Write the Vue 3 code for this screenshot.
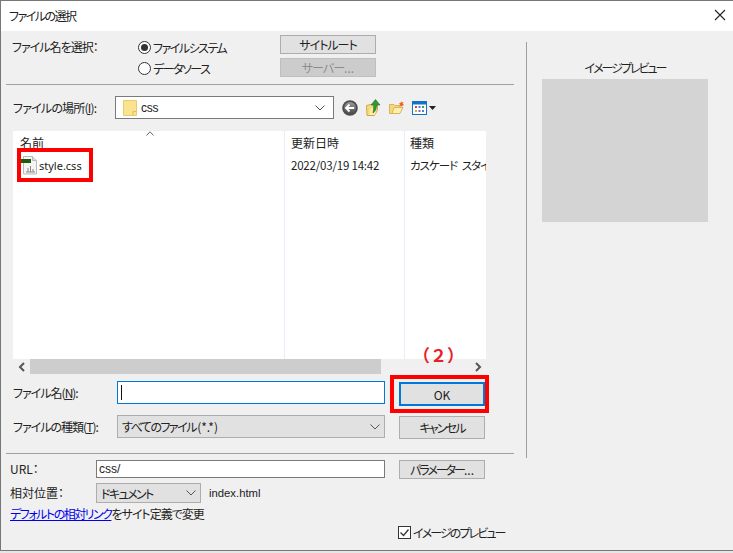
<template>
  <div class="dialog">
    <div class="titlebar">
      <span class="title">ファイルの選択</span>
      <svg class="close" width="12" height="12" viewBox="0 0 12 12"><path d="M1 1l10 10M11 1L1 11" stroke="#222" stroke-width="1.1" fill="none"/></svg>
    </div>

    <div class="body">
      <div class="left">
        <!-- 選択元 -->
        <div class="source-row">
          <span class="source-label">ファイル名を選択：</span>
          <div class="radios">
            <label class="radio"><i class="dot on"></i>ファイルシステム</label>
            <label class="radio"><i class="dot"></i>データソース</label>
          </div>
          <div class="site-btns">
            <button class="btn site">サイトルート</button>
            <button class="btn site off">サーバー<span class="plain">...</span></button>
          </div>
        </div>
        <div class="rule"></div>

        <!-- 場所 -->
        <div class="place-row">
          <span class="place-label">ファイルの場所(<u>I</u>):</span>
          <div class="place-select">
            <svg width="14" height="16" viewBox="0 0 14 16"><path d="M.5.5h13v15H.5z" fill="#fbe28f" stroke="#e8cb70"/><path d="M10 15.500v-4h3.500" fill="none" stroke="#e0bd5c"/></svg>
            <span>css</span>
            <svg class="chev" width="10" height="6" viewBox="0 0 10 6"><path d="M.5.5L5 5 9.500.5" fill="none" stroke="#555"/></svg>
          </div>
          <div class="tools">
            <svg width="16" height="16" viewBox="0 0 16 16"><defs><linearGradient id="backfill" x1="0" y1="0" x2="0" y2="1"><stop offset="0" stop-color="#9a9a9a"/><stop offset="1" stop-color="#4a4a4a"/></linearGradient></defs><circle cx="8" cy="8" r="7.800" fill="#4d4d4d"/><circle cx="8" cy="8" r="6" fill="url(#backfill)"/><path d="M3.800 8h8.400M7.500 4.500L4 8l3.500 3.500" fill="none" stroke="#fff" stroke-width="1.800"/></svg>
            <svg width="15" height="17" viewBox="0 0 15 17"><path d="M.5 6.500l4-1 7 .5v5l-3 5.500H1z" fill="#f8da7c" stroke="#cfa945"/><path d="M3 16l2-7h6l-2 7z" fill="#fdeca6"/><path d="M7 14c3-2 3.500-5 3.500-8H14L9.500.5 5 6h2.800c0 3-.3 5.500-.8 8z" fill="#2f9a35" stroke="#1c6e24" stroke-width=".6"/></svg>
            <svg width="15" height="13" viewBox="0 0 15 13"><path d="M.5 3.500h4.500l1 1h5v2l-2.500 6H.5z" fill="#f7d878" stroke="#d7b65a"/><path d="M3 12.500l2-6h9l-3 6z" fill="#fdeeb0" stroke="#d7b65a"/><path d="M12 0l.7 1.600L14.500 1l-.7 1.800L15 4l-1.500.5L13 6l-1-1.200-1.500.2.500-1.500-1-1.200 1.600-.3z" fill="#f0641e"/></svg>
            <span class="view-btn">
              <svg width="15" height="14" viewBox="0 0 15 14"><rect x=".5" y=".5" width="14" height="13" fill="#fff" stroke="#1472c9"/><rect x="1" y="1" width="13" height="2.500" fill="#1472c9"/><path d="M3 5h2v2H3z" fill="#d8433b"/><path d="M6.500 5h2v2h-2z" fill="#3f86d8"/><path d="M10 5h2v2h-2z" fill="#4aa13f"/><path d="M3 9h2v2H3z" fill="#e8a33a"/><path d="M6.500 9h2v2h-2z" fill="#8b5fc7"/><path d="M10 9h2v2h-2z" fill="#3f86d8"/></svg>
              <svg width="7" height="4" viewBox="0 0 7 4"><path d="M0 0h7L3.500 4z" fill="#222"/></svg>
            </span>
          </div>
        </div>

        <!-- ファイル一覧 -->
        <div class="files">
          <div class="file-table">
            <div class="col col-name">
              <svg class="sort" width="8" height="5" viewBox="0 0 8 5"><path d="M.5 4.500L4 .8l3.500 3.700" fill="none" stroke="#666"/></svg>
              <div class="head">名前</div>
              <div class="cell name-cell">
                <svg width="18" height="20" viewBox="0 0 18 20"><path d="M3.500.5h9l4 4v13.500h-13z" fill="#f4f4f4" stroke="#b9b9b9"/><path d="M12.500.5v4h4" fill="#ddd" stroke="#b9b9b9"/><rect x="1" y="3" width="10" height="4" fill="#1f5a0e"/><path d="M6 16h9M8 12v4M10.500 10v6M13 13v3" stroke="#8a8a8a" fill="none"/></svg>
                <span>style.css</span>
              </div>
            </div>
            <div class="col col-date">
              <div class="head">更新日時</div>
              <div class="cell date-cell">2022/03/19 14:42</div>
            </div>
            <div class="col col-type">
              <div class="head">種類</div>
              <div class="cell type-cell">カスケード スタイル シート</div>
            </div>
            <div class="name-mark"></div>
          </div>
          <div class="scrollbar">
            <svg width="7" height="10" viewBox="0 0 7 10"><path d="M6 1L2 5l4 4" fill="none" stroke="#555" stroke-width="2"/></svg>
            <div class="track"><div class="thumb"></div></div>
            <svg width="7" height="10" viewBox="0 0 7 10"><path d="M1 1l4 4-4 4" fill="none" stroke="#555" stroke-width="2"/></svg>
          </div>
        </div>

        <!-- ファイル名 -->
        <div class="name-grid">
          <span class="form-label">ファイル名(<u>N</u>):</span>
          <div class="name-input"><i class="caret"></i></div>
          <div class="ok-wrap">
            <span class="step">（２）</span>
            <div class="ok-mark"><button class="btn ok">OK</button></div>
          </div>
          <span class="form-label">ファイルの種類(<u>T</u>):</span>
          <div class="type-select">
            <span>すべてのファイル <span class="plain">(*.*)</span></span>
            <svg width="10" height="6" viewBox="0 0 10 6"><path d="M.5.5L5 5 9.500.5" fill="none" stroke="#555"/></svg>
          </div>
          <button class="btn cancel">キャンセル</button>
        </div>
        <div class="rule rule2"></div>

        <!-- URL -->
        <div class="url-row">
          <span class="url-label">URL：</span>
          <div class="url-input">css/</div>
          <button class="btn param">パラメーター<span class="plain">...</span></button>
        </div>
        <div class="rel-row">
          <span class="url-label">相対位置：</span>
          <div class="rel-select">
            <span>ドキュメント</span>
            <svg width="10" height="6" viewBox="0 0 10 6"><path d="M.5.5L5 5 9.500.5" fill="none" stroke="#555"/></svg>
          </div>
          <span class="rel-file">index.html</span>
        </div>
        <div class="link-row"><a class="link">デフォルトの相対リンク</a>をサイト定義で変更</div>
        <label class="check"><svg width="13" height="13" viewBox="0 0 13 13"><rect x=".5" y=".5" width="12" height="12" fill="#fff" stroke="#333"/><path d="M2.500 6.500l3 3 5-6" fill="none" stroke="#333" stroke-width="1.300"/></svg>イメージのプレビュー</label>
      </div>

      <div class="right">
        <div class="preview-title">イメージプレビュー</div>
        <div class="preview"></div>
      </div>
    </div>
  </div>
</template>

<script setup>
</script>

<style>
html, body {
  margin: 0;
  background: #e6e6e6;
}
</style>

<style scoped>
.dialog {
  width: 733px;
  height: 551px;
  box-sizing: border-box;
  overflow: hidden;
  background: #f0f0f0;
  border-top: 1px solid #777;
  border-left: 1px solid #777;
  border-bottom: 1px solid #777;
  font-family: "Noto Sans CJK JP", "Noto Sans", sans-serif;
  font-feature-settings: "palt";
  font-size: 12px;
  letter-spacing: -1px;
  color: #222;
  display: flex;
  flex-direction: column;
}

.plain {
  letter-spacing: 0;
}

.titlebar {
  height: 30px;
  flex: none;
  background: #fff;
  display: flex;
  align-items: center;
  justify-content: space-between;
  padding: 0 7px 2px 8px;
  box-sizing: border-box;
}

.title {
  letter-spacing: -1.500px;
}

.body {
  flex: 1;
  display: flex;
}

.left {
  width: 512px;
  flex: none;
  padding-left: 5px;
  box-sizing: border-box;
}

.right {
  margin-left: 13px;
  margin-top: 11px;
  height: 416px;
  box-sizing: border-box;
  border-left: 1px solid #a0a0a0;
  padding: 17px 0 0 15px;
  width: 182px;
}

.preview-title {
  text-align: center;
  width: 166px;
  line-height: 18px;
  letter-spacing: -2px;
}

.preview {
  width: 166px;
  height: 143px;
  background: #d4d4d4;
  margin-top: 2px;
}

.source-row {
  display: flex;
  height: 53px;
  padding-top: 4px;
  box-sizing: border-box;
}

.source-label {
  width: 132px;
  padding-left: 6px;
  line-height: 24px;
  box-sizing: border-box;
}

.radios {
  width: 142px;
  padding-top: 2px;
  letter-spacing: -1.500px;
}

.radio {
  display: flex;
  align-items: center;
  gap: 2px;
  height: 21px;
}

.dot {
  width: 11px;
  height: 11px;
  border: 1px solid #333;
  border-radius: 50%;
  background: #fff;
  position: relative;
}

.dot.on::after {
  content: "";
  position: absolute;
  left: 2px;
  top: 2px;
  width: 7px;
  height: 7px;
  border-radius: 50%;
  background: #333;
}

.site-btns {
  display: flex;
  flex-direction: column;
  gap: 4px;
}

.btn {
  font-family: inherit;
  font-feature-settings: inherit;
  font-size: 12px;
  letter-spacing: -1px;
  color: #222;
  background: #e1e1e1;
  border: 1px solid #adadad;
  padding: 0;
  box-sizing: border-box;
}

.site {
  width: 96px;
  height: 19px;
  line-height: 15px;
}

.site.off {
  background: #cccccc;
  border-color: #bfbfbf;
  color: #8c8c8c;
}

.rule {
  height: 1px;
  background: #a0a0a0;
  margin-right: -1px;
}

.place-row {
  display: flex;
  align-items: center;
  margin-top: 11px;
  height: 23px;
}

.place-label {
  width: 109px;
  padding-left: 7px;
  box-sizing: border-box;
  letter-spacing: -.8px;
}

.place-select {
  width: 219px;
  height: 23px;
  box-sizing: border-box;
  background: #fff;
  border: 1px solid #7a7a7a;
  display: flex;
  align-items: center;
  gap: 4px;
  padding: 0 8px 0 7px;
  font-family: "Liberation Sans", sans-serif;
  font-size: 12px;
  letter-spacing: -.3px;
}

.place-select .chev {
  margin-left: auto;
}

.tools {
  display: flex;
  align-items: center;
  gap: 8px;
  margin-left: 8px;
}

.view-btn {
  display: flex;
  align-items: center;
  gap: 2px;
}

.files {
  margin: 12px 0 0 7px;
}

.file-table {
  width: 473px;
  height: 228px;
  background: #fff;
  display: flex;
  position: relative;
}

.col {
  box-sizing: border-box;
  padding-left: 6px;
  overflow: hidden;
  white-space: nowrap;
  position: relative;
}

.col-name {
  width: 272px;
  padding-left: 7px;
  border-right: 1px solid #e8eef8;
}

.col-date {
  width: 120px;
  border-right: 1px solid #e8eef8;
}

.col-type {
  flex: 1;
  padding-left: 5px;
}

.sort {
  position: absolute;
  left: 133px;
  top: 0;
}

.head {
  margin-top: 3px;
  line-height: 18px;
  letter-spacing: 0;
}

.cell {
  margin-top: 4px;
  line-height: 18px;
  font-size: 11.500px;
}

.date-cell {
  letter-spacing: -.2px;
}

.type-cell {
  word-spacing: 3px;
}

.name-cell {
  display: flex;
  align-items: center;
  gap: 1px;
  margin-top: 3px;
  height: 22px;
  font-family: "Noto Sans", sans-serif;
  font-size: 11px;
  letter-spacing: 0;
}

.name-mark {
  position: absolute;
  box-sizing: border-box;
  border: 4px solid #f00;
  left: 4px;
  top: 17px;
  width: 76px;
  height: 34px;
}

.scrollbar {
  width: 473px;
  height: 15px;
  box-sizing: border-box;
  padding: 0 4px 0 5px;
  display: flex;
  align-items: center;
  gap: 5px;
}

.scrollbar svg {
  flex: none;
}

.track {
  flex: 1;
}

.thumb {
  width: 351px;
  height: 15px;
  background: #cdcdcd;
}

.name-grid {
  display: grid;
  grid-template-columns: 111px 268px 100px;
  grid-template-rows: 23px 23px;
  row-gap: 11px;
  align-items: center;
  margin-top: 7px;
}

.form-label {
  padding-left: 7px;
}

.name-input {
  height: 23px;
  box-sizing: border-box;
  background: #fff;
  border: 1px solid #0078d7;
  display: flex;
  align-items: center;
  padding-left: 3px;
}

.caret {
  width: 1px;
  height: 15px;
  background: #111;
}

.ok-wrap {
  position: relative;
  align-self: start;
  padding: 1px 0 0 14px;
}

.step {
  position: absolute;
  left: 28px;
  top: -37px;
  color: #e8202a;
  font-feature-settings: normal;
  letter-spacing: 0;
  font-weight: 700;
  font-size: 17px;
  line-height: 22px;
  white-space: nowrap;
}

.ok-mark {
  width: 86px;
  height: 24px;
  position: relative;
}

.ok-mark::before {
  content: "";
  position: absolute;
  inset: -7px -4px -7px -9px;
  border: 4px solid #f00;
}

.btn.ok {
  width: 86px;
  height: 24px;
  border: 2px solid #0078d7;
  position: relative;
  letter-spacing: 0;
}

.type-select {
  height: 23px;
  box-sizing: border-box;
  background: #e1e1e1;
  border: 1px solid #adadad;
  display: flex;
  align-items: center;
  justify-content: space-between;
  padding: 0 4px;
  letter-spacing: -1.500px;
}

.btn.cancel {
  width: 86px;
  height: 23px;
  margin: 1px 0 0 14px;
  align-self: start;
  letter-spacing: -1.800px;
}

.rule2 {
  margin-top: 15px;
}

.url-row,
.rel-row {
  display: flex;
  align-items: flex-start;
  margin-left: 4px;
}

.url-row {
  margin-top: 6px;
  height: 19px;
}

.url-label {
  width: 86px;
  flex: none;
  line-height: 18px;
  letter-spacing: 0;
}

.url-input {
  width: 289px;
  height: 18px;
  box-sizing: border-box;
  background: #fff;
  border: 1px solid #7a7a7a;
  padding-left: 2px;
  line-height: 16px;
  font-family: "Liberation Sans", sans-serif;
  font-size: 12px;
  letter-spacing: 0;
}

.btn.param {
  width: 86px;
  height: 19px;
  margin-left: 14px;
  line-height: 15px;
  letter-spacing: -2px;
}

.rel-row {
  margin-top: 4px;
  height: 20px;
  align-items: center;
}

.rel-select {
  width: 105px;
  height: 20px;
  box-sizing: border-box;
  background: #e1e1e1;
  border: 1px solid #adadad;
  display: flex;
  align-items: center;
  justify-content: space-between;
  padding: 0 4px;
  letter-spacing: -1.600px;
}

.rel-file {
  margin-left: 8px;
  font-family: "Liberation Sans", sans-serif;
  font-size: 11.300px;
  letter-spacing: 0;
}

.link-row {
  margin: 2px 0 0 4px;
  line-height: 18px;
}

.link {
  color: #0000ee;
  text-decoration: underline;
  letter-spacing: -1.500px;
}

.check {
  display: flex;
  align-items: center;
  gap: 2px;
  margin: 3px 0 0 392px;
  line-height: 13px;
  white-space: nowrap;
  letter-spacing: -1.900px;
}

.check svg {
  flex: none;
}
</style>
